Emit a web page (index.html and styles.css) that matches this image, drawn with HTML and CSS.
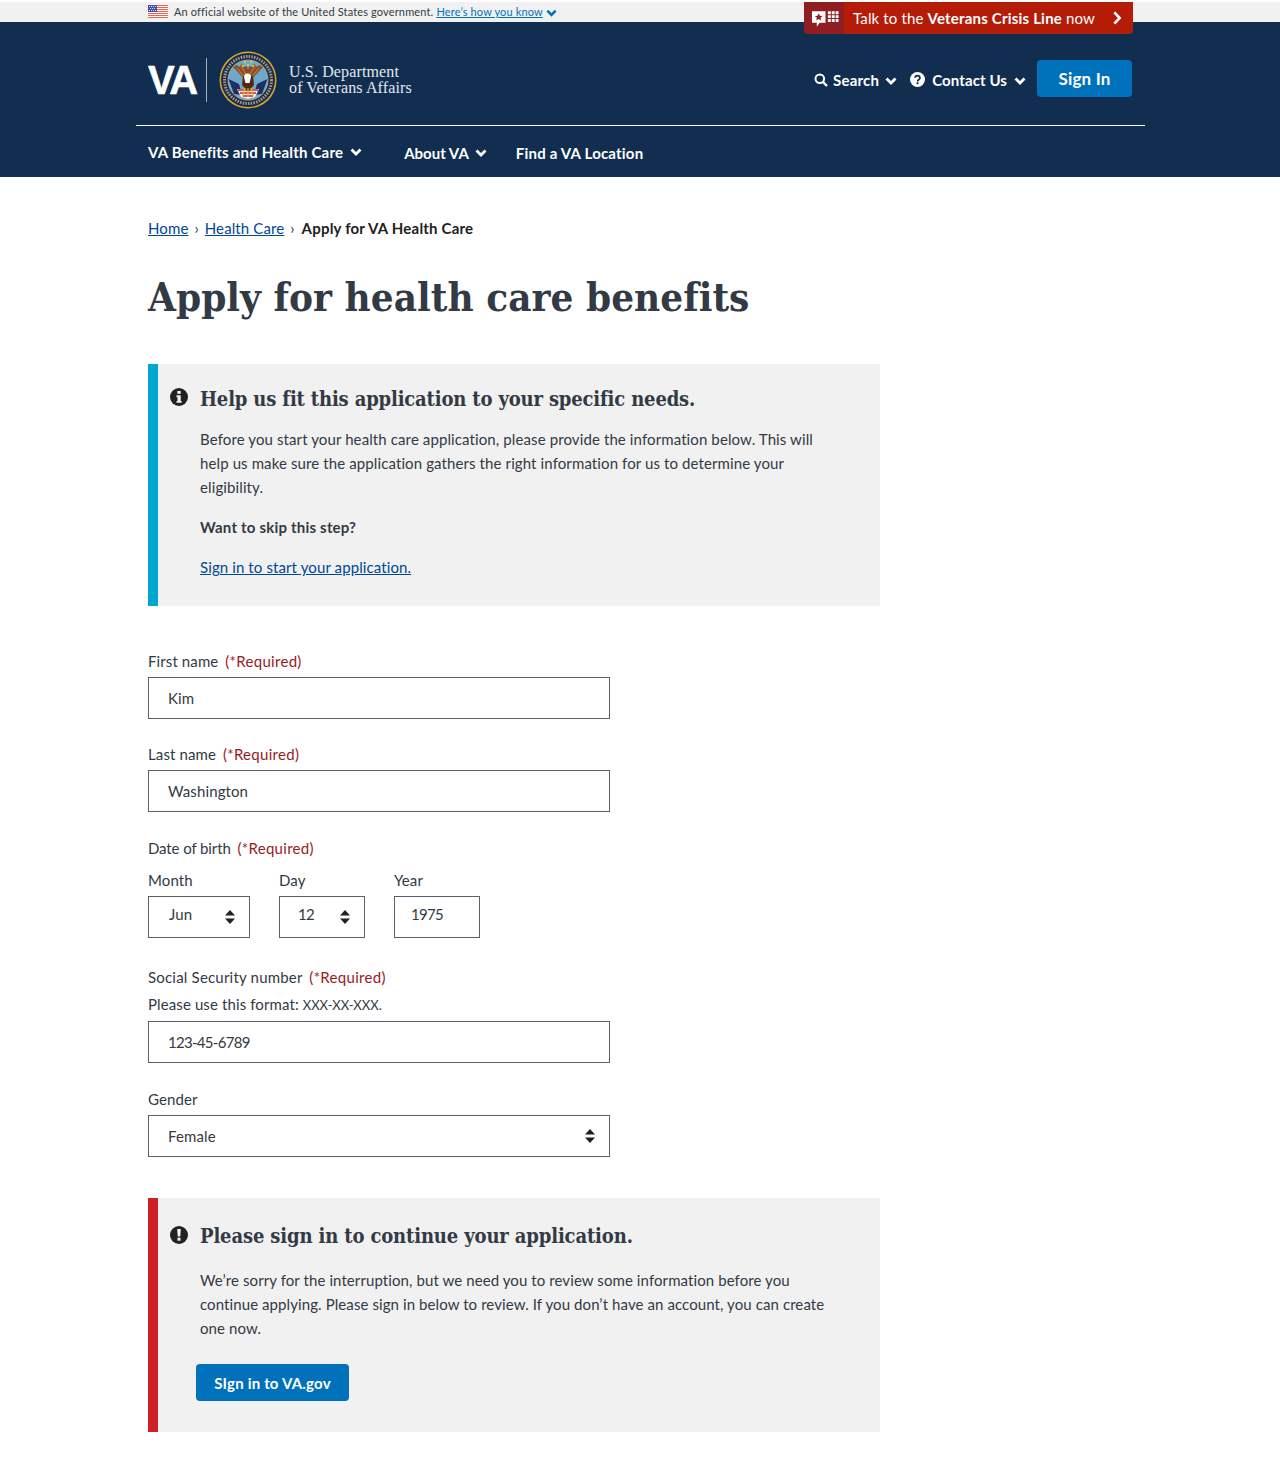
FILE: index.html
```html
<!DOCTYPE html>
<html lang="en">
<head>
<meta charset="utf-8">
<title>Apply for health care benefits</title>
<link rel="stylesheet" href="styles.css">
</head>
<body>
<div class="gov-banner">
  <div class="gov-inner">
    <svg class="flag" viewBox="0 0 20 13" width="20" height="13" aria-hidden="true">
      <rect width="20" height="13" fill="#fff"/>
      <path d="M0 .5h20M0 2.500h20M0 4.500h20M0 6.500h20M0 8.500h20M0 10.500h20M0 12.500h20" stroke="#f2604f" stroke-width="1"/>
      <rect width="9" height="7" fill="#3f4fa8"/>
      <path d="M1 1.500h7M2 3.500h5M1 5.500h7" stroke="#dfe2f2" stroke-width="1" stroke-dasharray="1 1"/>
    </svg>
    <span class="gov-text">An official website of the United States government.</span>
    <a class="gov-link" href="#">Here’s how you know</a>
    <svg class="gov-chev" viewBox="0 0 12 8" width="11" height="8" aria-hidden="true"><path d="M1.500 1.500 6 6l4.500-4.500" fill="none" stroke="#0071bb" stroke-width="2.800"/></svg>
  </div>
</div>
<a class="crisis" href="#">
  <span class="crisis-icon">
    <svg viewBox="0 0 30 18" width="29" height="18" aria-hidden="true">
      <path d="M1 1h14v12H9l-3 4v-4H1z" fill="#fff"/>
      <path d="m8 3 1.200 2.700 2.900.2-2.200 1.900.7 2.800L8 9.100l-2.600 1.500.7-2.800-2.200-1.900 2.900-.2z" fill="#8f1d22"/>
      <path d="M17.500 2.500h11M17.500 6.500h11M17.500 10.500h11" stroke="#fff" stroke-width="3" stroke-dasharray="3 1"/>
    </svg>
  </span>
  <span class="crisis-text">Talk to the <b>Veterans Crisis Line</b> now</span>
  <svg class="crisis-chev" viewBox="0 0 10 16" width="10" height="14" aria-hidden="true"><path d="M2 1.500 8 8l-6 6.500" fill="none" stroke="#fff" stroke-width="3"/></svg>
</a>
<header class="site-header">
  <div class="header-top">
    <a class="brand" href="#">
      <span class="va-mark">VA</span>
      <span class="brand-rule"></span>
      <svg class="seal" viewBox="0 0 58 58" width="58" height="58" aria-hidden="true">
        <circle cx="29" cy="29" r="28.500" fill="#d9a92f"/>
        <circle cx="29" cy="29" r="27" fill="#1b2a55"/>
        <circle cx="29" cy="29" r="23.500" fill="none" stroke="#a89f7c" stroke-width="3" stroke-dasharray="1.500 1.200"/>
        <circle cx="29" cy="29" r="20.500" fill="#d9a92f"/>
        <circle cx="29" cy="29" r="20" fill="#6fa9c9"/>
        <path d="M9.500 28 20 33l3 11-8-1z" fill="#1f2f66"/>
        <path d="M48.500 28 38 33l-3 11 8-1z" fill="#1f2f66"/>
        <path d="M18 38h22l-4 8-7 2-7-2z" fill="#f4f1ec"/>
        <path d="M19 39h20M21 42h16M24 45h10" stroke="#c8262c" stroke-width="1.500"/>
        <path d="M28 31 14 16l4-2 2 2 3-3 3 3 2-1 2 9z" fill="#8a4f22"/>
        <path d="M30 31 44 16l-4-2-2 2-3-3-3 3-2-1-2 9z" fill="#8a4f22"/>
        <path d="M18 17l8 10M22 15l6 10M40 17l-8 10M36 15l-6 10" stroke="#c08a52" stroke-width="1"/>
        <path d="M24 25h10l1 9-6 7-6-7z" fill="#4f2a12"/>
        <path d="M25 26a3.500 3.500 0 0 1 7 0l-1.500 6h-4z" fill="#fff"/>
        <path d="M29 37v9M26 37l-2 8M32 37l2 8" stroke="#e3b23a" stroke-width="1.300"/>
        <path d="M26 11h.1M32 11h.1M24 15h.1M29 14h.1M34 15h.1" stroke="#f0c93a" stroke-width="2.200" stroke-linecap="round"/>
      </svg>
      <span class="dept-name">U.S. Department<br>of Veterans Affairs</span>
    </a>
    <nav class="util-nav">
      <a class="util-item util-search" href="#">
        <svg viewBox="0 0 14 14" width="14" height="14" aria-hidden="true"><circle cx="5.800" cy="5.800" r="4.300" fill="none" stroke="#fff" stroke-width="2"/><path d="m9 9 4 4" stroke="#fff" stroke-width="2.400"/></svg>
        <span>Search</span>
        <svg class="chev" viewBox="0 0 12 8" width="12" height="8" aria-hidden="true"><path d="M1.500 1.500 6 6l4.500-4.500" fill="none" stroke="#fff" stroke-width="2.800"/></svg>
      </a>
      <a class="util-item util-contact" href="#">
        <svg viewBox="0 0 16 16" width="15" height="15" aria-hidden="true"><circle cx="8" cy="8" r="8" fill="#fff"/><path d="M5.400 6.200a2.600 2.400 0 1 1 3.900 2.100c-.8.500-1.200.8-1.200 1.700" fill="none" stroke="#112e51" stroke-width="1.900"/><rect x="7" y="11" width="2.100" height="2" fill="#112e51"/></svg>
        <span>Contact Us</span>
        <svg class="chev" viewBox="0 0 12 8" width="12" height="8" aria-hidden="true"><path d="M1.500 1.500 6 6l4.500-4.500" fill="none" stroke="#fff" stroke-width="2.800"/></svg>
      </a>
      <a class="btn btn-signin" href="#">Sign In</a>
    </nav>
  </div>
  <nav class="main-nav">
    <a class="nav-item nav-benefits" href="#">VA Benefits and Health Care
      <svg class="chev" viewBox="0 0 12 8" width="12" height="8" aria-hidden="true"><path d="M1.500 1.500 6 6l4.500-4.500" fill="none" stroke="#fff" stroke-width="2.800"/></svg></a>
    <a class="nav-item nav-about" href="#">About VA
      <svg class="chev" viewBox="0 0 12 8" width="12" height="8" aria-hidden="true"><path d="M1.500 1.500 6 6l4.500-4.500" fill="none" stroke="#fff" stroke-width="2.800"/></svg></a>
    <a class="nav-item nav-find" href="#">Find a VA Location</a>
  </nav>
</header>
<main class="page">
  <ol class="crumbs">
    <li><a href="#">Home</a></li>
    <li class="sep">›</li>
    <li><a href="#">Health Care</a></li>
    <li class="sep">›</li>
    <li class="current">Apply for VA Health Care</li>
  </ol>
  <h1>Apply for health care benefits</h1>
  <section class="alert alert-info">
    <svg class="alert-icon" viewBox="0 0 18 18" width="18" height="18" aria-hidden="true"><circle cx="9" cy="9" r="9" fill="#212121"/><rect x="7.300" y="3" width="3.400" height="2.800" fill="#f1f1f1"/><path d="M6.500 7.300h4.200v5.600h1v1.900h-5.200v-1.900h1v-3.700h-1z" fill="#f1f1f1"/></svg>
    <h2>Help us fit this application to your specific needs.</h2>
    <p>Before you start your health care application, please provide the information below. This will<br>help us make sure the application gathers the right information for us to determine your<br>eligibility.</p>
    <p class="gap"><strong>Want to skip this step?</strong></p>
    <p class="gap"><a href="#">Sign in to start your application.</a></p>
  </section>
  <form class="form">
    <div class="field field-first">
      <label for="first">First name <span class="req">(*Required)</span></label>
      <input id="first" class="control" value="Kim">
    </div>
    <div class="field field-tight">
      <label for="last">Last name <span class="req">(*Required)</span></label>
      <input id="last" class="control" value="Washington">
    </div>
    <div class="field">
      <div class="label">Date of birth <span class="req">(*Required)</span></div>
      <div class="dob">
        <div class="dob-part dob-month">
          <label for="month">Month</label>
          <div class="select-wrap">
            <select id="month" class="control small"><option>Jun</option></select>
            <svg class="updown" viewBox="0 0 10 14" width="10" height="14" aria-hidden="true"><path d="M5 0l5 5.500H0zM5 14 0 8.500h10z" fill="#212121"/></svg>
          </div>
        </div>
        <div class="dob-part dob-day">
          <label for="day">Day</label>
          <div class="select-wrap">
            <select id="day" class="control small digits"><option>12</option></select>
            <svg class="updown" viewBox="0 0 10 14" width="10" height="14" aria-hidden="true"><path d="M5 0l5 5.500H0zM5 14 0 8.500h10z" fill="#212121"/></svg>
          </div>
        </div>
        <div class="dob-part dob-year">
          <label for="year">Year</label>
          <input id="year" class="control small year digits" value="1975">
        </div>
      </div>
    </div>
    <div class="field field-ssn">
      <label for="ssn">Social Security number <span class="req">(*Required)</span></label>
      <div class="hint">Please use this format: <span class="mask">XXX-XX-XXX.</span></div>
      <input id="ssn" class="control digits ssn" value="123-45-6789">
    </div>
    <div class="field">
      <label for="gender">Gender</label>
      <div class="select-wrap">
        <select id="gender" class="control"><option>Female</option></select>
        <svg class="updown" viewBox="0 0 10 14" width="10" height="14" aria-hidden="true"><path d="M5 0l5 5.500H0zM5 14 0 8.500h10z" fill="#212121"/></svg>
      </div>
    </div>
  </form>
  <section class="alert alert-error">
    <svg class="alert-icon" viewBox="0 0 18 18" width="18" height="18" aria-hidden="true"><circle cx="9" cy="9" r="9" fill="#212121"/><path d="M7.200 3h3.600l-.5 7.500H7.700z" fill="#f1f1f1"/><rect x="7.500" y="11.700" width="3" height="3" fill="#f1f1f1"/></svg>
    <h2>Please sign in to continue your application.</h2>
    <p>We’re sorry for the interruption, but we need you to review some information before you<br>continue applying. Please sign in below to review. If you don’t have an account, you can create<br>one now.</p>
    <a class="btn btn-alert" href="#">SIgn in to VA.gov</a>
  </section>
</main>
</body>
</html>
```
FILE: styles.css
```css
* { box-sizing: border-box; }
html, body { margin: 0; padding: 0; }
body {
  font-family: "Lato", "Noto Sans", sans-serif;
  font-size: 15px;
  line-height: 24px;
  letter-spacing: .11px;
  color: #323a45;
  background: #fff;
  position: relative;
  min-height: 1467px;
}
a { color: #004795; }
b, strong { letter-spacing: .2px; }

.gov-banner { height: 22px; border-top: 2px solid #fff; background: #f1f1f1; }
.gov-inner { display: flex; align-items: center; height: 20px; padding-left: 148px; font-size: 11px; line-height: 20px; letter-spacing: .15px; }
.flag { margin-right: 6px; margin-top: -1px; }
.gov-text { color: #323a45; }
.gov-link { color: #0071bb; margin-left: 3px; }
.gov-chev { margin-left: 3px; margin-top: 2px; }

.crisis {
  position: absolute; left: 804px; top: 2px; width: 329px; height: 32px;
  display: flex; align-items: center;
  background: #b51c08; color: #fff; text-decoration: none;
  border-radius: 0 0 4px 4px; overflow: hidden;
}
.crisis-icon { width: 40px; height: 32px; background: #8f1d22; display: flex; align-items: center; justify-content: center; flex: none; padding-left: 3px; padding-top: 1px; }
.crisis-text { margin-left: 9px; font-size: 15px; white-space: nowrap; letter-spacing: .14px; }
.crisis-chev { position: absolute; right: 11px; top: 9px; }

.site-header { background: #112e51; height: 155px; color: #fff; }
.header-top {
  width: 1009px; margin-left: 136px; height: 104px; padding: 13px 13px 0 12px;
  border-bottom: 1px solid #fff;
  display: flex; justify-content: space-between;
}
.brand { display: flex; align-items: center; color: #fff; text-decoration: none; height: 90px; }
.va-mark { font-family: "Liberation Sans", sans-serif; font-weight: 700; font-size: 40px; letter-spacing: -2.500px; width: 48px; line-height: 40px; -webkit-text-stroke: .5px #fff; }
.brand-rule { width: 1px; height: 44px; background: #a7afbd; margin-left: 10px; margin-right: 12px; }
.seal { flex: none; }
.dept-name { font-family: "Liberation Serif", serif; font-size: 16px; line-height: 16px; letter-spacing: .14px; margin-left: 12px; color: #e4e7ec; }

.util-nav { display: flex; align-items: flex-start; padding-top: 25px; font-weight: 700; font-size: 15px; letter-spacing: .2px; }
.util-item { display: flex; align-items: center; color: #fff; text-decoration: none; height: 37px; margin-top: 1px; }
.util-item .chev { margin-left: 6px; margin-top: 2px; }
.util-contact .chev { margin-left: 7px; }
.util-search span { margin-left: 5px; }
.util-contact { margin-left: 13px; }
.util-contact span { margin-left: 7px; letter-spacing: .1px; }
.btn { display: inline-flex; align-items: center; justify-content: center; background: #0071bb; color: #fff; text-decoration: none; border-radius: 4px; font-weight: 700; }
.btn-signin { width: 95px; height: 37px; margin-left: 11px; font-size: 17px; }

.main-nav { display: flex; padding-left: 148px; height: 51px; font-weight: 700; font-size: 15px; letter-spacing: .2px; }
.nav-item { display: flex; align-items: center; gap: 7px; color: #fff; text-decoration: none; height: 51px; padding-top: 3px; }
.nav-benefits { margin-top: -1px; }
.nav-about { margin-left: 42px; gap: 6px; letter-spacing: 0; }
.nav-find { margin-left: 29px; }

.page { padding: 0 0 0 148px; }
.crumbs { list-style: none; display: flex; margin: 0; padding: 39px 0 0; height: 64px; }
.crumbs .sep { margin: 0 6px; color: #323a45; }
.crumbs .current { font-weight: 700; color: #212121; letter-spacing: .2px; margin-left: 1px; }
h1 {
  font-family: "DejaVu Serif", serif; font-weight: 700; font-size: 40px; line-height: 50px;
  font-stretch: condensed; letter-spacing: .03px; color: #323a45; margin: 31px 0 0; height: 92px;
}
.alert { position: relative; width: 732px; background: #f1f1f1; padding: 21px 0 0 42px; border-left: 10px solid; }
.alert-info { border-left-color: #00a6d2; height: 242px; }
.alert-error { border-left-color: #cd2026; height: 234px; margin-top: 41px; padding-top: 20px; letter-spacing: .09px; }
.alert-icon { position: absolute; left: 12px; top: 24px; }
.alert-error .alert-icon { top: 28px; }
.alert h2 { font-family: "DejaVu Serif", serif; font-stretch: condensed; font-weight: 700; font-size: 20px; line-height: 28px; letter-spacing: -.16px; margin: 0 0 14px; color: #323a45; }
.alert p { margin: 0; white-space: nowrap; }
.alert .gap { margin-top: 16px; }
.alert-error h2 { margin-bottom: 18px; margin-top: 4px; letter-spacing: -.14px; }
.btn-alert { width: 153px; height: 37px; margin: 24px 0 0 -4px; font-size: 15px; letter-spacing: .2px; padding-top: 1px; }

.form { padding-top: 43px; width: 462px; }
.field { margin-top: 24px; }
.field-first { margin-top: 0; }
.field-tight { margin-top: 23px; }
.field-ssn { margin-top: 27px; }
.field-ssn label { letter-spacing: .2px; }
label, .label { display: block; line-height: 24px; }
.label { letter-spacing: -.1px; }
.req { color: #981b1e; margin-left: 3px; letter-spacing: .3px; }
.hint { line-height: 24px; margin-top: 3px; }
.mask { font-size: 13px; letter-spacing: 0; line-height: 1; }
.control {
  display: block; width: 462px; height: 42px; margin: 4px 0 0; padding: 0 19px;
  border: 1px solid #5b616b; background: #fff; border-radius: 0;
  font: inherit; letter-spacing: inherit; color: #323a45; appearance: none; -webkit-appearance: none; outline: none;
}
.digits { letter-spacing: -.7px; }
.ssn { margin-top: 5px; }
.select-wrap { position: relative; }
.updown { position: absolute; right: 15px; top: 14px; }
.dob { display: flex; margin-top: 8px; }
.dob-month { width: 102px; }
.dob-day { width: 86px; margin-left: 29px; }
.dob-year { width: 86px; margin-left: 29px; }
.dob-part .control { width: 100%; }
.control.small { padding: 0 0 6px 20px; }
.dob-day .control.small { padding-left: 18px; }
.control.year { padding-left: 16px; }
```
